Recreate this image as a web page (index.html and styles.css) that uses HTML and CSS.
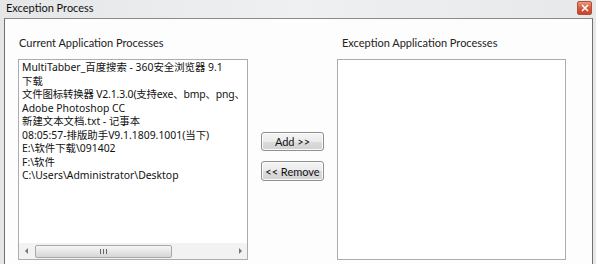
FILE: index.html
```html
<!DOCTYPE html>
<html>
<head>
<meta charset="utf-8">
<link rel="stylesheet" href="styles.css">
</head>
<body>
<div class="titlebar">
  <span class="title">Exception Process</span>
  <span class="close"><svg width="8" height="8" viewBox="0 0 8 8"><path d="M1 1L7 7M7 1L1 7" stroke="#fff" stroke-width="1.6"/></svg></span>
</div>
<div class="frame">
  <div class="col left">
    <div class="label">Current Application Processes</div>
    <div class="list">
      <div class="items">
        <div>MultiTabber_百度搜索 - 360安全浏览器 9.1</div>
        <div>下载</div>
        <div class="tight">文件图标转换器 V2.1.3.0(支持exe、bmp、png、</div>
        <div>Adobe Photoshop CC</div>
        <div>新建文本文档.txt - 记事本</div>
        <div>08:05:57-排版助手V9.1.1809.1001(当下)</div>
        <div>E:\软件下载\091402</div>
        <div>F:\软件</div>
        <div>C:\Users\Administrator\Desktop</div>
      </div>
      <div class="hscroll">
        <span class="arrow arrow-left"></span>
        <div class="track"><div class="thumb"><span class="grip"></span></div></div>
        <span class="arrow arrow-right"></span>
      </div>
    </div>
  </div>
  <div class="buttons">
    <button class="btn btn-add">Add &gt;&gt;</button>
    <button class="btn btn-remove">&lt;&lt; Remove</button>
  </div>
  <div class="col right">
    <div class="label label-right">Exception Application Processes</div>
    <div class="list"></div>
  </div>
</div>
</body>
</html>
```
FILE: styles.css
```css
html, body {
  margin: 0;
  padding: 0;
  width: 596px;
  height: 264px;
  overflow: hidden;
  background: linear-gradient(to right, #e4e6e8, #eef0f1 50%, #e6e8ea);
  font-family: Lato, "Noto Sans CJK SC", sans-serif;
  color: #222;
}
.titlebar {
  height: 18px;
  display: flex;
  align-items: flex-start;
  justify-content: space-between;
}
.title {
  margin-left: 6px;
  font-size: 11px;
  line-height: 16px;
  color: #111;
}
.close {
  margin-top: 1px;
  margin-right: 4px;
  width: 15px;
  height: 14px;
  border-radius: 2px;
  background: linear-gradient(#e99a80, #d2553a 55%, #c8452c);
  border: 1px solid #b0503a;
  display: flex;
  align-items: center;
  justify-content: center;
  box-sizing: border-box;
}
.frame {
  margin-left: 4px;
  margin-right: 3px;
  height: 246px;
  border: 1px solid #707070;
  border-top-color: #8a8a8a;
  border-bottom: none;
  background: #fdfdfd;
  box-sizing: border-box;
  display: flex;
  align-items: flex-start;
  padding-top: 15px;
}
.col {
  display: flex;
  flex-direction: column;
}
.left {
  margin-left: 13px;
  width: 230px;
}
.right {
  width: 229px;
}
.label {
  font-size: 11px;
  line-height: 17px;
  margin-left: 1px;
  margin-bottom: 8px;
  color: #222;
  white-space: nowrap;
}
.label-right {
  margin-left: 5px;
}
.list {
  height: 201px;
  border: 1px solid #a9adb3;
  background: #fff;
  box-sizing: border-box;
  display: flex;
  flex-direction: column;
}
.items {
  flex: 1;
  padding: 1px 0 0 3px;
  font-family: "Noto Sans", "Noto Sans CJK SC", sans-serif;
  font-size: 10.4px;
  line-height: 13.5px;
  white-space: nowrap;
  overflow: hidden;
  color: #111;
}
.tight {
  letter-spacing: -0.15px;
}
.hscroll {
  height: 16px;
  background: #f2f2f2;
  display: flex;
  align-items: center;
}
.arrow {
  width: 16px;
  height: 16px;
  position: relative;
  flex: none;
}
.arrow::after {
  content: "";
  position: absolute;
  top: 5px;
  width: 0;
  height: 0;
  border-top: 3px solid transparent;
  border-bottom: 3px solid transparent;
}
.arrow-left::after {
  left: 6px;
  border-right: 3px solid #777;
}
.arrow-right::after {
  left: 8px;
  border-left: 3px solid #777;
}
.track {
  flex: 1;
  height: 16px;
  display: flex;
  align-items: center;
}
.thumb {
  width: 137px;
  height: 13px;
  border: 1px solid #a8a8a8;
  border-radius: 2px;
  box-sizing: border-box;
  background: linear-gradient(#f6f6f6, #e6e6e6 50%, #d6d6d6);
  display: flex;
  align-items: center;
  justify-content: center;
}
.grip {
  width: 7px;
  height: 5px;
  background: repeating-linear-gradient(to right, #666 0 1px, transparent 1px 3px);
}
.buttons {
  width: 63px;
  margin: 0 13px;
  padding-top: 98px;
  display: flex;
  flex-direction: column;
  gap: 10px;
}
.btn {
  width: 63px;
  height: 19px;
  padding: 0;
  font-family: Lato, sans-serif;
  font-size: 11px;
  line-height: 15px;
  color: #111;
  border: 1px solid #8e8f8f;
  border-radius: 3px;
  background: linear-gradient(#f5f5f5, #ebebeb 50%, #dcdcdc 51%, #d2d2d2);
  box-shadow: inset 0 0 0 1px #fbfbfb;
}
.btn-remove {
  height: 20px;
}
```
